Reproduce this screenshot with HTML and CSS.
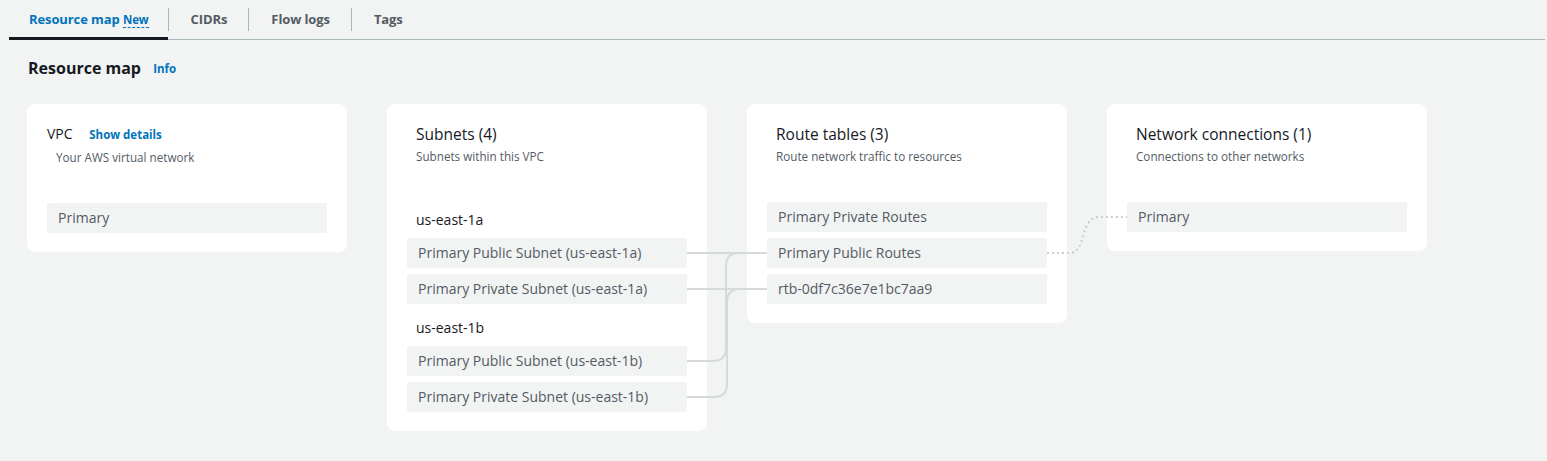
FILE: index.html
```html
<!DOCTYPE html>
<html lang="en">
<head>
    <meta charset="UTF-8">
    <title>Resource map</title>
    <link rel="stylesheet" href="styles.css">
</head>
<body>
    <div class="tabs">
        <div class="tab active">Resource map <span class="new-badge">New</span></div>
        <div class="tab">CIDRs</div>
        <div class="tab">Flow logs</div>
        <div class="tab">Tags</div>
    </div>

    <div class="page">
        <h2 class="section-title">Resource map <a class="info-link">Info</a></h2>

        <div class="map">
            <div class="card">
                <div class="card-title">VPC <a class="details-link">Show details</a></div>
                <div class="card-sub indent">Your AWS virtual network</div>
                <div class="items">
                    <div class="item">Primary</div>
                </div>
            </div>

            <div class="card">
                <div class="card-head">
                    <div class="card-title big">Subnets (4)</div>
                    <div class="card-sub">Subnets within this VPC</div>
                </div>
                <div class="zone first">us-east-1a</div>
                <div class="item">Primary Public Subnet (us-east-1a)</div>
                <div class="item">Primary Private Subnet (us-east-1a)</div>
                <div class="zone">us-east-1b</div>
                <div class="item">Primary Public Subnet (us-east-1b)</div>
                <div class="item">Primary Private Subnet (us-east-1b)</div>
            </div>

            <div class="card">
                <div class="card-head">
                    <div class="card-title big">Route tables (3)</div>
                    <div class="card-sub">Route network traffic to resources</div>
                </div>
                <div class="items">
                    <div class="item">Primary Private Routes</div>
                    <div class="item">Primary Public Routes</div>
                    <div class="item">rtb-0df7c36e7e1bc7aa9</div>
                </div>
            </div>

            <div class="card">
                <div class="card-head">
                    <div class="card-title big">Network connections (1)</div>
                    <div class="card-sub">Connections to other networks</div>
                </div>
                <div class="items">
                    <div class="item">Primary</div>
                </div>
            </div>

            <!-- connection lines between the columns -->
            <svg class="links" width="1420" height="330" viewBox="0 0 1420 330">
                <g fill="none" stroke="#d5dbdb" stroke-width="2">
                    <path d="M660,149 H740"/>
                    <path d="M660,185 H740"/>
                    <path d="M660,257 H686 Q699,257 699,244 V162 Q699,149 712,149 H740"/>
                    <path d="M660,293 H687 Q700,293 700,280 V198 Q700,185 713,185 H740"/>
                </g>
                <path d="M1020,149 H1043 C1060,149 1052,113 1072,113 H1100" fill="none" stroke="#c9cfcf" stroke-width="2" stroke-dasharray="2 3"/>
            </svg>
        </div>
    </div>
</body>
</html>
```

FILE: styles.css
```css
body {
    margin: 0;
    background-color: #f2f3f3;
    font-family: "Open Sans", "Noto Sans", Arial, sans-serif;
    color: #16191f;
}
.tabs {
    display: flex;
    margin: 0 2px 0 9px;
    border-bottom: 1px solid #aab7b8;
    height: 39px;
}
.tab {
    position: relative;
    padding: 0 21px 0 22px;
    margin: 8px 0 0;
    height: 23px;
    line-height: 22px;
    font-size: 13px;
    font-weight: bold;
    letter-spacing: -0.1px;
    color: #545b64;
    border-left: 1px solid #aab7b8;
}
.tab:first-child {
    padding: 0 19px 0 20px;
    border-left: none;
}
.tab.active {
    color: #0073bb;
}
.tab.active::after {
    content: "";
    position: absolute;
    left: 0;
    right: 0;
    top: 29px;
    height: 3px;
    background: #16191f;
}
.new-badge {
    font-size: 11.5px;
    border-bottom: 1px dashed #0073bb;
}
.page {
    padding: 0 27px;
}
.section-title {
    margin: 16px 0 0 1px;
    font-size: 16px;
    font-weight: bold;
    line-height: 24px;
}
.info-link {
    margin-left: 8px;
    font-size: 11.5px;
    color: #0073bb;
    vertical-align: 1px;
}
.map {
    position: relative;
    display: flex;
    align-items: flex-start;
    gap: 40px;
    margin-top: 23px;
}
.card {
    width: 280px;
    padding: 20px 20px 19px;
    background: white;
    border-radius: 8px;
}
.card-head {
    padding-left: 9px;
}
.card-title {
    font-size: 14px;
    line-height: 20px;
}
.card-title.big {
    font-size: 15.5px;
}
.details-link {
    margin-left: 13px;
    font-size: 11.5px;
    font-weight: bold;
    color: #0073bb;
}
.card-sub {
    font-size: 11.7px;
    line-height: 24px;
    color: #545b64;
}
.card-sub.indent {
    padding-left: 9px;
}
.items {
    margin-top: 34px;
}
.zone {
    margin: 14px 0 8px;
    padding-left: 9px;
    line-height: 20px;
    font-size: 14px;
}
.zone.first {
    margin-top: 42px;
}
.item {
    height: 30px;
    line-height: 30px;
    padding: 0 11px;
    background: #f2f3f3;
    border-radius: 2px;
    font-size: 14px;
    color: #545b64;
}
.item + .item {
    margin-top: 6px;
}
.links {
    position: absolute;
    left: 0;
    top: 0;
    pointer-events: none;
}
```
